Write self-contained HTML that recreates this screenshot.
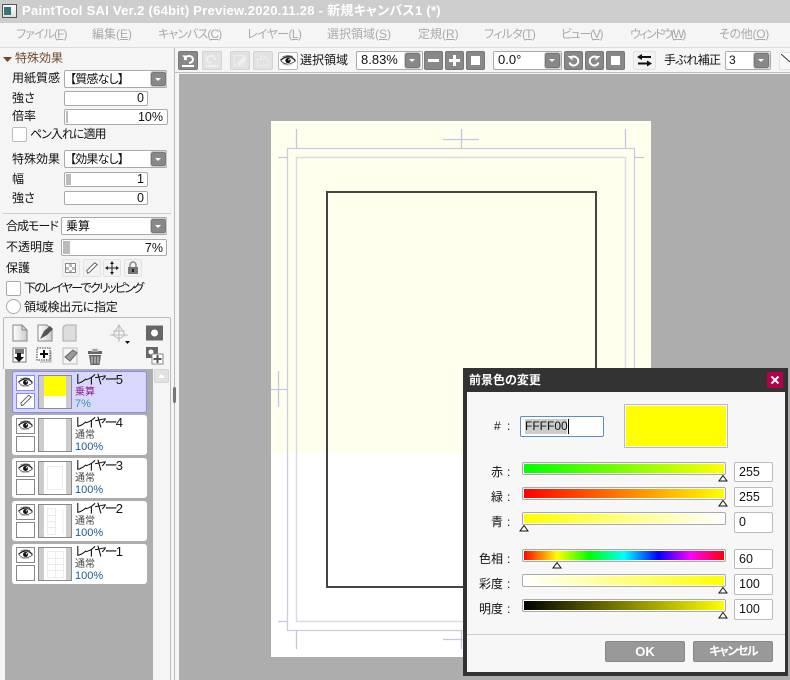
<!DOCTYPE html>
<html lang="ja"><head><meta charset="utf-8"><style>
html,body{margin:0;padding:0}
#r{position:relative;width:790px;height:680px;overflow:hidden;background:#f5f5f5;font-family:"Liberation Sans","Noto Sans CJK JP",sans-serif;font-size:12px;color:#111;font-feature-settings:"palt" 1}
#r div,#r svg{position:absolute;box-sizing:border-box}
.t{white-space:nowrap;line-height:16px;height:16px}
.m{top:26px;color:#aaa}
.m u{text-decoration:underline}
.f{background:#fff;border:1px solid #aaa;border-radius:2px}
.a{background:#888;border:1px solid #777;border-radius:2px;outline:1px solid #ccc;outline-offset:0}
.a:after{content:"";position:absolute;left:3px;top:5px;border:3px solid transparent;border-top:3px solid #fff;border-bottom:0}
.g{background:#888;border:1px solid #777;border-radius:2px}
.l{background:#e2e2e2;border:1px solid #d4d4d4;border-radius:2px}
.p{background:#f2f2f2;border:1px solid #e2e2e2;border-radius:2px}
.lay{left:12px;width:135px;height:40px;background:#fff;border-radius:3px}
.bx{left:16px;width:19px;height:16px;border:1px solid #888;background:#fff}
.th{left:38px;width:34px;height:34px;border:1px solid #888;background:linear-gradient(90deg,#ccc 5px,#fff 5px,#fff 27px,#ccc 27px)}
.s{left:522px;width:204px;height:13px;border:1px solid #aaa;border-radius:2px;background-clip:padding-box;box-shadow:inset 0 0 0 1px #fff}
.v{left:734px;width:39px;background:#fff;border:1px solid #bbb;border-radius:2px;padding-left:4px;line-height:19px;font-size:12.5px}
.sm{font-size:10px;line-height:12px;height:12px}
.n{font-size:13px;letter-spacing:-1.7px}
.num{font-size:12.5px;text-align:right}
</style></head><body><div id="r">
<svg width="0" height="0" style="left:0;top:0"><defs>
<symbol id="eye" viewBox="0 0 20 14"><path d="M1 7Q6 2.500 11 3Q16 3.500 19 8Q14 11.500 9 11.500Q4 11 1 7Z" fill="#fff" stroke="#222" stroke-width=".8"/><circle cx="10" cy="7" r="3.300" fill="#111"/><circle cx="11.200" cy="6" r=".9" fill="#fff"/><path d="M0.500 6.500Q6 1.500 12 2Q16 2.500 19.500 7" fill="none" stroke="#111" stroke-width="1.100"/><path d="M3 2.500Q9-.5 16 2" fill="none" stroke="#555" stroke-width=".9"/><path d="M3 11Q9 14 15 12" fill="none" stroke="#999" stroke-width=".7"/></symbol>
<symbol id="pen" viewBox="0 0 16 14"><path d="M3 13L2 10L11 1L14 3L5 12Z" fill="#fff" stroke="#444" stroke-width=".9"/></symbol>
</defs></svg>

<div style="left:0;top:0;width:790px;height:23px;background:#cdcdcd"></div>
<div style="left:2px;top:4px;width:15px;height:14px;background:linear-gradient(#fff,#ddd);border:1px solid #555"></div>
<div style="left:4px;top:7px;width:7px;height:8px;background:#36767a"></div>
<div class="t" style="left:22px;top:3px;color:#fff;font-size:13px;font-weight:bold;letter-spacing:.27px">PaintTool SAI Ver.2 (64bit) Preview.2020.11.28 - 新規キャンバス1 (*)</div>

<div class="t m" style="left:16px;letter-spacing:-.9px">ファイル(<u>F</u>)</div>
<div class="t m" style="left:92px">編集(<u>E</u>)</div>
<div class="t m" style="left:158px;letter-spacing:-.9px">キャンバス(<u>C</u>)</div>
<div class="t m" style="left:247px;letter-spacing:-.6px">レイヤー(<u>L</u>)</div>
<div class="t m" style="left:327px">選択領域(<u>S</u>)</div>
<div class="t m" style="left:418px">定規(<u>R</u>)</div>
<div class="t m" style="left:484px;letter-spacing:-.7px">フィルタ(<u>T</u>)</div>
<div class="t m" style="left:561px;letter-spacing:-1.3px">ビュー(<u>V</u>)</div>
<div class="t m" style="left:630px;letter-spacing:-2px">ウィンドウ(<u>W</u>)</div>
<div class="t m" style="left:719px;letter-spacing:-.3px">その他(<u>O</u>)</div>
<div style="left:0;top:47px;width:790px;height:1px;background:#ddd"></div>

<!-- canvas area -->
<div style="left:179px;top:74px;width:611px;height:606px;background:#adadad"></div>
<div style="left:175px;top:72px;width:615px;height:1px;background:#bbb"></div>
<div style="left:271px;top:121px;width:380px;height:536px;background:#fff"></div>
<div style="left:271px;top:121px;width:380px;height:333px;background:#ffffee"></div>
<svg style="left:271px;top:121px" width="380" height="536" viewBox="271 121 380 536" fill="none">
<rect x="287.500" y="148.500" width="347" height="482" stroke="#ccccdf" stroke-width="1.300"/>
<rect x="296.500" y="157.500" width="329" height="464" stroke="#dcdce6" stroke-width="1.500"/>
<rect x="327" y="192" width="269" height="395" stroke="#444" stroke-width="2"/>
<path d="M296.500 129V148M278 157.500H287M461.500 129V148M443 139.500H479M625.500 129V148M634 157.500H644M271 389.500H287M278.500 371V407M278 621.500H287M296.500 630V649M461.500 630V649M443 639.500H479" stroke="#c6c6e4" stroke-width="1.300"/>
</svg>

<!-- toolbar -->
<div class="g" style="left:178px;top:51px;width:20px;height:19px"></div>
<svg style="left:181px;top:54px" width="14" height="13" viewBox="0 0 14 13" fill="none" stroke="#fff" stroke-width="2"><path d="M4 6A4 3.500 0 1 1 8 9M1 12H13"/><path d="M1 1.500L6 1.500L6 6.500Z" fill="#fff" stroke="none"/></svg>
<div class="l" style="left:202px;top:51px;width:20px;height:19px"></div>
<svg style="left:205px;top:54px" width="14" height="13" viewBox="0 0 14 13" fill="none" stroke="#f0f0f0" stroke-width="2"><path d="M10 6A4 3.500 0 1 0 6 9M1 12H13"/></svg>
<div class="l" style="left:230px;top:51px;width:20px;height:19px"></div>
<svg style="left:233px;top:54px" width="14" height="13" viewBox="0 0 14 13" fill="none" stroke="#f2f2f2"><rect x="1.500" y="1.500" width="10" height="10" stroke-dasharray="1.500 1"/><path d="M5 9L11 3L13 5L7 11Z" fill="#eee"/></svg>
<div class="l" style="left:253px;top:51px;width:20px;height:19px"></div>
<svg style="left:256px;top:54px" width="14" height="13" viewBox="0 0 14 13" fill="none" stroke="#f2f2f2"><rect x="1.500" y="5.500" width="11" height="6" stroke-dasharray="1.500 1"/><path d="M4 5A3 3 0 0 1 10 5"/></svg>
<div class="f" style="left:278px;top:52px;width:20px;height:18px;border-color:#bbb"></div>
<svg style="left:280px;top:54px" width="16" height="13"><use href="#eye" width="16" height="13"/></svg>
<div class="t" style="left:300px;top:52px">選択領域</div>
<div class="f" style="left:356px;top:51px;width:67px;height:19px"></div>
<div class="t" style="left:361px;top:52px;font-size:13px">8.83%</div>
<div class="a" style="left:405px;top:53px;width:15px;height:15px"></div>
<div class="g" style="left:424px;top:51px;width:19px;height:19px"></div><div style="left:428px;top:59px;width:11px;height:3px;background:#fff"></div>
<div class="g" style="left:445px;top:51px;width:19px;height:19px"></div><div style="left:449px;top:59px;width:11px;height:3px;background:#fff"></div><div style="left:453px;top:55px;width:3px;height:11px;background:#fff"></div>
<div class="g" style="left:466px;top:51px;width:19px;height:19px"></div><div style="left:471px;top:56px;width:9px;height:9px;background:#fff"></div>
<div class="f" style="left:493px;top:51px;width:69px;height:19px"></div>
<div class="t" style="left:498px;top:52px;font-size:13px">0.0°</div>
<div class="a" style="left:545px;top:53px;width:15px;height:15px"></div>
<div class="g" style="left:564px;top:51px;width:19px;height:19px"></div>
<svg style="left:567px;top:54px" width="13" height="13" viewBox="0 0 13 13" fill="none" stroke="#fff" stroke-width="2"><path d="M4 3.500A4.500 4.500 0 1 1 2.500 8.500"/><path d="M0.500 2H5.500V6.500Z" fill="#fff" stroke="none"/></svg>
<div class="g" style="left:585px;top:51px;width:19px;height:19px"></div>
<svg style="left:588px;top:54px" width="13" height="13" viewBox="0 0 13 13" fill="none" stroke="#fff" stroke-width="2"><path d="M9 3.500A4.500 4.500 0 1 0 10.500 8.500"/><path d="M12.500 2H7.500V6.500Z" fill="#fff" stroke="none"/></svg>
<div class="g" style="left:606px;top:51px;width:19px;height:19px"></div><div style="left:611px;top:56px;width:9px;height:9px;background:#fff"></div>
<div class="p" style="left:633px;top:51px;width:23px;height:19px"></div>
<svg style="left:637px;top:54px" width="15" height="13" viewBox="0 0 15 13" fill="#111"><path d="M0 3L5 0V2H14V4H5V6ZM15 9.500L10 6.500V8.500H1V10.500H10V12.500Z"/></svg>
<div class="t" style="left:664px;top:52px;letter-spacing:-.6px">手ぶれ補正</div>
<div class="f" style="left:725px;top:51px;width:46px;height:19px"></div>
<div class="t" style="left:729px;top:52px">3</div>
<div class="a" style="left:754px;top:53px;width:15px;height:15px"></div>
<div class="p" style="left:779px;top:52px;width:14px;height:18px;background:#f8f8f8"></div>
<svg style="left:781px;top:54px" width="9" height="9"><path d="M0 0L9 8" stroke="#333"/></svg>

<!-- left panel -->
<div style="left:0;top:48px;width:175px;height:632px;background:#f5f5f5"></div>
<div style="left:174px;top:48px;width:1px;height:632px;background:#bbb"></div>
<div style="left:170px;top:369px;width:1px;height:311px;background:#bbb"></div>
<svg style="left:3px;top:57px" width="9" height="5"><path d="M0 0H9L4.500 5Z" fill="#744425"/></svg>
<div class="t" style="left:15px;top:50px;color:#6e4a2c">特殊効果</div>
<div class="t" style="left:12px;top:70px">用紙質感</div>
<div class="f" style="left:64px;top:70px;width:103px;height:18px"></div>
<div class="t" style="left:70px;top:71px;letter-spacing:-.8px">【質感なし】</div>
<div class="a" style="left:151px;top:72px;width:15px;height:14px"></div>
<div class="t" style="left:12px;top:90px">強さ</div>
<div class="f" style="left:64px;top:91px;width:84px;height:15px"></div>
<div class="t num" style="left:64px;top:90px;width:80px">0</div>
<div class="t" style="left:12px;top:108px">倍率</div>
<div class="f" style="left:64px;top:109px;width:104px;height:16px"></div>
<div style="left:66px;top:111px;width:2px;height:12px;background:#bbb"></div>
<div class="t num" style="left:64px;top:109px;width:99px">10%</div>
<div class="f" style="left:12px;top:127px;width:15px;height:15px;border-color:#bbb"></div>
<div class="t" style="left:30px;top:126px;letter-spacing:-1px">ペン入れに適用</div>
<div class="t" style="left:12px;top:151px">特殊効果</div>
<div class="f" style="left:64px;top:150px;width:103px;height:18px"></div>
<div class="t" style="left:70px;top:151px;letter-spacing:-.8px">【効果なし】</div>
<div class="a" style="left:151px;top:152px;width:15px;height:14px"></div>
<div class="t" style="left:12px;top:171px">幅</div>
<div class="f" style="left:64px;top:172px;width:84px;height:15px"></div>
<div style="left:66px;top:174px;width:5px;height:11px;background:#bbb"></div>
<div class="t num" style="left:64px;top:171px;width:80px">1</div>
<div class="t" style="left:12px;top:190px">強さ</div>
<div class="f" style="left:64px;top:191px;width:84px;height:14px"></div>
<div class="t num" style="left:64px;top:190px;width:80px">0</div>
<div style="left:3px;top:213px;width:168px;height:1px;background:#ccc"></div>
<div class="t" style="left:6px;top:218px;letter-spacing:-1px">合成モード</div>
<div class="f" style="left:61px;top:217px;width:106px;height:18px"></div>
<div class="t" style="left:66px;top:218px">乗算</div>
<div class="a" style="left:151px;top:219px;width:15px;height:14px"></div>
<div class="t" style="left:6px;top:239px">不透明度</div>
<div class="f" style="left:61px;top:239px;width:106px;height:17px"></div>
<div style="left:63px;top:241px;width:7px;height:13px;background:#bbb"></div>
<div class="t num" style="left:61px;top:240px;width:102px">7%</div>
<div class="t" style="left:6px;top:260px">保護</div>
<div class="p" style="left:62px;top:259px;width:18px;height:18px"></div>
<div style="left:65px;top:263px;width:11px;height:10px;border:1px solid #888;background:conic-gradient(#bbb 25%,#fff 0 50%,#bbb 0 75%,#fff 0) 0 0/6px 6px"></div>
<div class="p" style="left:83px;top:259px;width:18px;height:18px"></div>
<svg style="left:85px;top:261px" width="14" height="14"><use href="#pen" width="14" height="14"/></svg>
<div class="p" style="left:103px;top:259px;width:18px;height:18px"></div>
<svg style="left:105px;top:261px" width="14" height="14" viewBox="0 0 14 14" fill="#222"><path d="M6.500 2H7.500V12H6.500ZM2 6.500H12V7.500H2ZM7 0L9 3H5ZM7 14L5 11H9ZM0 7L3 5V9ZM14 7L11 9V5Z"/></svg>
<div class="p" style="left:124px;top:259px;width:18px;height:18px"></div>
<svg style="left:127px;top:261px" width="12" height="14" viewBox="0 0 12 14"><path d="M3 7V4A3 3 0 0 1 9 4V7" fill="none" stroke="#888" stroke-width="1.500"/><rect x="1" y="6" width="10" height="7" fill="#777"/><rect x="5" y="8" width="2" height="3" fill="#222"/></svg>
<div class="f" style="left:6px;top:281px;width:15px;height:15px;border-color:#aaa"></div>
<div class="t" style="left:24px;top:280px;letter-spacing:-1.7px">下のレイヤーでクリッピング</div>
<div class="f" style="left:6px;top:299px;width:15px;height:15px;border-radius:50%;border-color:#aaa"></div>
<div class="t" style="left:24px;top:299px;letter-spacing:-.25px">領域検出元に指定</div>

<!-- layer tools -->
<div style="left:3px;top:317px;width:168px;height:52px;border:1px solid #bbb;border-bottom:0;border-radius:2px 2px 0 0"></div>
<svg style="left:10px;top:323px" width="160" height="43" viewBox="10 323 160 43">
<defs><linearGradient id="gg" x1="0" x2="1"><stop offset="0" stop-color="#fff"/><stop offset="1" stop-color="#ccc"/></linearGradient></defs>
<path d="M13 325H22L27 330V341H13Z" fill="url(#gg)" stroke="#888"/><path d="M22 325V330H27" fill="none" stroke="#888"/>
<path d="M38 325H47L52 330V341H38Z" fill="url(#gg)" stroke="#888"/><path d="M40 339L44 331L50 326L53 329L47 335Z" fill="#555"/>
<path d="M63 327L66 325H76V341H63Z" fill="#ddd" stroke="#aaa"/>
<path d="M119 325L125 335L119 339L113 335ZM110 335H128M119 325V342M113 331H125" fill="none" stroke="#bbb"/><path d="M125 341H130L127.500 344Z" fill="#111"/>
<rect x="146" y="325.500" width="17" height="15" fill="#666"/><circle cx="154.500" cy="333" r="3.500" fill="#fff"/>
<rect x="13" y="348" width="13" height="14" fill="#fff" stroke="#777"/><rect x="15" y="349" width="9" height="5" fill="#777"/><path d="M17 353H21V357H24L19 362L14 357H17Z" fill="#111"/>
<rect x="37" y="348" width="13" height="12" fill="#fff" stroke="#333" stroke-dasharray="1.500 1"/><path d="M43 350H45V353H48V355H45V358H43V355H40V353H43Z" fill="#111"/><path d="M51 351V362H40" fill="none" stroke="#aaa"/>
<path d="M63 348H77V364H63Z" fill="#f4f4f4" stroke="#bbb"/><path d="M65 357L73 350L77 353L70 361Z" fill="#999" stroke="#666"/>
<path d="M88 351H102V354H88ZM89 355H101L99.500 365H90.500Z" fill="#666"/><path d="M92 349H98V351H92ZM92 356.500V363.500M95 356.500V363.500M98 356.500V363.500" stroke="#ddd" fill="#666"/>
<rect x="146" y="347" width="12" height="11" fill="#666"/><circle cx="151" cy="352" r="2.500" fill="#fff"/><rect x="152" y="354" width="11" height="10" fill="#fff" stroke="#888"/><path d="M156.500 355H158.500V358H161.500V360H158.500V363H156.500V360H153.500V358H156.500Z" fill="#555"/>
</svg>

<!-- layer list -->
<div style="left:5px;top:369px;width:148px;height:311px;background:#adadad"></div>
<div style="left:154px;top:369px;width:15px;height:14px;background:#e2e2e2;border:1px solid #d4d4d4;border-radius:2px"></div>
<svg style="left:158px;top:374px" width="7" height="4"><path d="M0 4L3.500 0L7 4Z" fill="#fff"/></svg>
<div style="left:173px;top:387px;width:3px;height:16px;background:#777;border-radius:2px"></div>

<div class="lay" style="top:371px;height:42px;background:#d8d8ff;border:1px solid #8888ff"></div>
<div class="bx" style="top:375px;border-color:#8888ff"></div><svg style="left:18px;top:376px" width="15" height="13"><use href="#eye" width="15" height="13"/></svg>
<div class="bx" style="top:393px;border-color:#8888ff"></div><svg style="left:19px;top:394px" width="14" height="13"><use href="#pen" width="14" height="13"/></svg>
<div class="th" style="top:375px;border-color:#8888aa"></div><div style="left:44px;top:376px;width:22px;height:20px;background:#ff0"></div>
<div class="t n" style="left:75px;top:372px">レイヤー5</div>
<div class="t sm" style="left:75px;top:387px;color:#8b1a8b">乗算</div>
<div class="t sm" style="left:75px;top:398px;font-size:11px;color:#2f98a8">7%</div>

<div class="lay" style="top:415px"></div>
<div class="bx" style="top:418px"></div><svg style="left:18px;top:419px" width="15" height="13"><use href="#eye" width="15" height="13"/></svg>
<div class="bx" style="top:436px"></div>
<div class="th" style="top:418px"></div>
<div class="t n" style="left:75px;top:415px">レイヤー4</div>
<div class="t sm" style="left:75px;top:430px;color:#444">通常</div>
<div class="t sm" style="left:75px;top:441px;font-size:11px;color:#1a5a90">100%</div>

<div class="lay" style="top:458px"></div>
<div class="bx" style="top:461px"></div><svg style="left:18px;top:462px" width="15" height="13"><use href="#eye" width="15" height="13"/></svg>
<div class="bx" style="top:479px"></div>
<div class="th" style="top:461px"></div><div style="left:47px;top:466px;width:16px;height:24px;border:1px solid #ececec"></div>
<div class="t n" style="left:75px;top:458px">レイヤー3</div>
<div class="t sm" style="left:75px;top:473px;color:#444">通常</div>
<div class="t sm" style="left:75px;top:484px;font-size:11px;color:#1a5a90">100%</div>

<div class="lay" style="top:501px"></div>
<div class="bx" style="top:504px"></div><svg style="left:18px;top:505px" width="15" height="13"><use href="#eye" width="15" height="13"/></svg>
<div class="bx" style="top:522px"></div>
<div class="th" style="top:504px"></div>
<svg style="left:47px;top:508px" width="17" height="27" fill="none" stroke="#ececec"><path d="M0.500 0.500H8.500V26.500H0.500ZM0.500 7.500H8.500M0.500 13.500H8.500M0.500 19.500H8.500M16 .5V26.500"/></svg>
<div class="t n" style="left:75px;top:501px">レイヤー2</div>
<div class="t sm" style="left:75px;top:516px;color:#444">通常</div>
<div class="t sm" style="left:75px;top:527px;font-size:11px;color:#1a5a90">100%</div>

<div class="lay" style="top:544px"></div>
<div class="bx" style="top:547px"></div><svg style="left:18px;top:548px" width="15" height="13"><use href="#eye" width="15" height="13"/></svg>
<div class="bx" style="top:565px"></div>
<div class="th" style="top:547px"></div>
<svg style="left:47px;top:551px" width="17" height="27" fill="none" stroke="#ececec"><path d="M0.500 0.500H16.500V26.500H0.500ZM0.500 7.500H16.500M0.500 13.500H16.500M0.500 19.500H16.500M8.500 .5V26.500"/></svg>
<div class="t n" style="left:75px;top:544px">レイヤー1</div>
<div class="t sm" style="left:75px;top:559px;color:#444">通常</div>
<div class="t sm" style="left:75px;top:570px;font-size:11px;color:#1a5a90">100%</div>

<!-- dialog -->
<div style="left:463px;top:368px;width:325px;height:308px;background:#333"></div>
<div style="left:467px;top:392px;width:318px;height:280px;background:#f7f7f7"></div>
<div class="t" style="left:469px;top:372px;color:#fff;font-weight:bold">前景色の変更</div>
<div style="left:767px;top:372px;width:16px;height:16px;background:#b5004a"></div>
<svg style="left:771px;top:376px" width="8" height="8"><path d="M0.500 .5L7.500 7.500M7.500 .5L.5 7.500" stroke="#fff" stroke-width="2"/></svg>
<div class="t" style="left:494px;top:418px">#</div><div class="t" style="left:507px;top:418px">:</div>
<div style="left:520px;top:416px;width:84px;height:21px;background:#fff;border:1px solid #5b8bd0;border-radius:2px"></div>
<div style="left:525px;top:419px;width:42px;height:15px;background:#ccc"></div>
<div class="t" style="left:525px;top:418px;font-size:12px">FFFF00</div>
<div style="left:568px;top:419px;width:1px;height:15px;background:#000"></div>
<div style="left:624px;top:404px;width:104px;height:44px;background:#ff0;border:1px solid #bbb;box-shadow:inset 0 0 0 1px #fff"></div>

<div class="t" style="left:491px;top:464px">赤</div><div class="t" style="left:507px;top:464px">:</div>
<div class="t" style="left:491px;top:489px">緑</div><div class="t" style="left:507px;top:489px">:</div>
<div class="t" style="left:491px;top:514px">青</div><div class="t" style="left:507px;top:514px">:</div>
<div class="t" style="left:479px;top:551px">色相</div><div class="t" style="left:507px;top:551px">:</div>
<div class="t" style="left:479px;top:576px">彩度</div><div class="t" style="left:507px;top:576px">:</div>
<div class="t" style="left:479px;top:601px">明度</div><div class="t" style="left:507px;top:601px">:</div>

<div class="s" style="top:462px;background-image:linear-gradient(90deg,#0f0,#ff0)"></div>
<div class="s" style="top:487px;background-image:linear-gradient(90deg,#f00,#ff0)"></div>
<div class="s" style="top:512px;background-image:linear-gradient(90deg,#ff0,#fff)"></div>
<div class="s" style="top:549px;background-image:linear-gradient(90deg,#f00,#ff0 17%,#0f0 33%,#0ff 50%,#00f 67%,#f0f 83%,#f00)"></div>
<div class="s" style="top:574px;background-image:linear-gradient(90deg,#fff,#ff0)"></div>
<div class="s" style="top:599px;background-image:linear-gradient(90deg,#000,#ff0)"></div>

<svg style="left:718px;top:475px" width="10" height="7"><path d="M5 .5L9 6H1Z" fill="#fff" stroke="#111"/></svg>
<svg style="left:718px;top:500px" width="10" height="7"><path d="M5 .5L9 6H1Z" fill="#fff" stroke="#111"/></svg>
<svg style="left:519px;top:525px" width="10" height="7"><path d="M5 .5L9 6H1Z" fill="#fff" stroke="#111"/></svg>
<svg style="left:552px;top:562px" width="10" height="7"><path d="M5 .5L9 6H1Z" fill="#fff" stroke="#111"/></svg>
<svg style="left:718px;top:587px" width="10" height="7"><path d="M5 .5L9 6H1Z" fill="#fff" stroke="#111"/></svg>
<svg style="left:718px;top:612px" width="10" height="7"><path d="M5 .5L9 6H1Z" fill="#fff" stroke="#111"/></svg>

<div class="v" style="top:462px;height:20px">255</div>
<div class="v" style="top:487px;height:20px">255</div>
<div class="v" style="top:512px;height:21px">0</div>
<div class="v" style="top:549px;height:20px">60</div>
<div class="v" style="top:574px;height:21px">100</div>
<div class="v" style="top:599px;height:21px">100</div>

<div style="left:467px;top:634px;width:318px;height:1px;background:#ccc"></div>
<div class="t" style="left:605px;top:641px;width:80px;height:21px;background:#999;border:1px solid #888;border-radius:2px;color:#fff;font-weight:bold;text-align:center;line-height:19px;font-size:13px">OK</div>
<div class="t" style="left:693px;top:641px;width:80px;height:21px;background:#999;border:1px solid #888;border-radius:2px;color:#fff;font-weight:bold;text-align:center;line-height:19px;letter-spacing:-1.500px">キャンセル</div>
</div></body></html>
